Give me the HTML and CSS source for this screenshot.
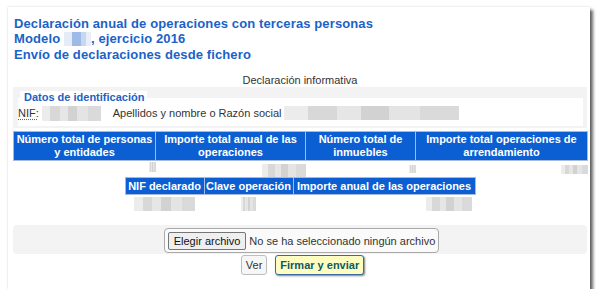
FILE: index.html
```html
<!DOCTYPE html>
<html lang="es">
<head>
<meta charset="utf-8">
<title>Declaración anual de operaciones con terceras personas</title>
<link rel="stylesheet" href="styles.css">
</head>
<body>
<div class="panel">
  <h1 class="title">Declaración anual de operaciones con terceras personas<br>Modelo <span class="blob blob-blue blob-model"></span>, ejercicio 2016<br>Envío de declaraciones desde fichero</h1>
  <p class="caption">Declaración informativa</p>
  <div class="ident">
    <div class="legend">Datos de identificación</div>
    <div class="ident-row">
      <abbr class="nif" title="Número de identificación fiscal">NIF:</abbr>
      <span class="blob blob-nif"></span>
      <span class="razon">Apellidos y nombre o Razón social</span>
      <span class="blob blob-razon"></span>
    </div>
  </div>

  <table class="grid grid-main">
    <colgroup><col class="c1"><col class="c2"><col class="c3"><col class="c4"></colgroup>
    <thead>
      <tr>
        <th>Número total de personas y entidades</th>
        <th>Importe total anual de las operaciones</th>
        <th>Número total de inmuebles</th>
        <th>Importe total operaciones de arrendamiento</th>
      </tr>
    </thead>
    <tbody>
      <tr>
        <td><span class="blob v1"></span></td>
        <td><span class="blob v2"></span></td>
        <td><span class="blob v3"></span></td>
        <td><span class="blob v4"></span></td>
      </tr>
    </tbody>
  </table>

  <table class="grid grid-detail">
    <colgroup><col class="d1"><col class="d2"><col class="d3"></colgroup>
    <thead>
      <tr>
        <th>NIF declarado</th>
        <th>Clave operación</th>
        <th>Importe anual de las operaciones</th>
      </tr>
    </thead>
    <tbody>
      <tr>
        <td class="center"><span class="blob w1"></span></td>
        <td class="center"><span class="blob w2"></span></td>
        <td class="right"><span class="blob w3"></span></td>
      </tr>
    </tbody>
  </table>

  <div class="file-box">
    <label class="file">
      <span class="file-btn">Elegir archivo</span>
      <span class="file-name">No se ha seleccionado ningún archivo</span>
    </label>
  </div>

  <div class="actions">
    <button class="btn btn-ver" type="button">Ver</button>
    <button class="btn btn-send" type="button">Firmar y enviar</button>
  </div>
</div>
</body>
</html>
```
FILE: styles.css
```css
* { box-sizing: border-box; }

body {
  margin: 0;
  background: #fff;
  font-family: "Liberation Sans", Arial, sans-serif;
  font-size: 11px;
  color: #333;
}

.panel {
  width: 582px;
  margin: 7px 0 0 8px;
  padding: 9px 3px 14px 5px;
  background: #fff;
  box-shadow: 0 0 2px rgba(0, 0, 0, 0.18), 3px 3px 3px rgba(0, 0, 0, 0.6);
}

.title {
  margin: 0;
  padding-left: 1px;
  font-size: 13px;
  line-height: 15.3px;
  font-weight: bold;
  letter-spacing: 0.12px;
  color: #1a62c8;
}

.caption {
  margin: 12px 0 0;
  line-height: 13px;
  text-align: center;
  color: #333;
}

/* blurred (anonymised) values */
.blob {
  display: inline-block;
  vertical-align: top;
  background: linear-gradient(90deg, #ececec 0 14%, #d8d8d8 14% 30%, #e6e6e6 30% 44%, #d2d2d2 44% 60%, #e4e4e4 60% 78%, #dadada 78%);
  filter: blur(0.6px);
}
.blob-blue {
  background: linear-gradient(90deg, #e4ecf8 0 30%, #9dbbe6 30% 62%, #c6d8f1 62% 80%, #e8eff9 80%);
}
.blob-model { width: 27px; height: 14px; margin-top: 1px; }

.ident {
  background: #f3f3f3;
  padding: 4px 4px 2px 5px;
  line-height: 13px;
}
.legend {
  width: max-content;
  margin-left: 2px;
  padding: 0 3px 0 4px;
  background: #fff;
  font-weight: bold;
  color: #1d5fc4;
}
.ident-row {
  display: flex;
  align-items: center;
  margin-top: -6px;
  padding: 8px 0 5px;
  line-height: 14px;
  background: #fff;
}
.nif {
  text-decoration: underline dotted #666;
  text-underline-offset: 2px;
}
.blob-nif { width: 59px; height: 15px; margin-left: 3px; }
.razon { margin-left: 12px; }
.blob-razon { width: 175px; height: 14px; margin-left: 2px; }

.grid {
  border-collapse: collapse;
  table-layout: fixed;
}
.grid th {
  background: #0b5fd3;
  color: #fff;
  font-weight: bold;
  border: 1px solid #a6badb;
  line-height: 13px;
  padding: 1px 2px;
  text-align: center;
}
.grid td {
  padding: 0;
  text-align: right;
  vertical-align: top;
}

.grid-main { width: 574px; margin-top: 3px; }
.grid-main .c1 { width: 142px; }
.grid-main .c2 { width: 150px; }
.grid-main .c3 { width: 110px; }
.grid-main .c4 { width: 172px; }
.grid-main td { height: 16px; }

.v1 { width: 7px; height: 10px; margin-top: 1px; }
.v2 { width: 44px; height: 13px; margin-top: 3px; }
.v3 { width: 7px; height: 8px; margin-top: 4px; }
.v4 { width: 27px; height: 9px; margin-top: 4px; }

.grid-detail { width: 350px; margin: 0 auto; }
.grid-detail .d1 { width: 79px; }
.grid-detail .d2 { width: 89px; }
.grid-detail .d3 { width: 182px; }
.grid-detail th {
  padding: 2px 0 1px;
  white-space: nowrap;
}
.grid-detail td { height: 18px; }
.grid-detail td.center { text-align: center; }
.grid-detail td.right { padding-right: 3px; }

.w1 { width: 61px; height: 14px; margin-top: 2px; }
.w2 { width: 15px; height: 14px; margin-top: 2px; }
.w3 { width: 46px; height: 14px; margin-top: 2px; }

.file-box {
  display: flex;
  justify-content: center;
  margin-top: 13px;
  padding: 3px 0 1px 3px;
  background: #f3f3f3;
  border-radius: 4px;
}
.file {
  display: inline-flex;
  align-items: center;
  height: 25px;
  padding: 0 3px;
  border: 1px solid #a9a9a9;
  border-radius: 4px;
  background: #fafafa;
}
.file-btn {
  display: inline-block;
  height: 18px;
  padding: 0 5px;
  line-height: 16px;
  border: 1px solid #767676;
  border-radius: 2px;
  background: #efefef;
  color: #111;
}
.file-name { margin-left: 3px; color: #333; }

.actions {
  display: flex;
  justify-content: center;
  gap: 8px;
  margin-top: 1px;
  padding-left: 5px;
}
.btn {
  height: 20px;
  padding: 0 4px;
  font-family: "Liberation Sans", Arial, sans-serif;
  font-size: 11px;
  border-radius: 3px;
  cursor: pointer;
}
.btn-ver {
  border: 1px solid #bdbdbd;
  background: #f6f6f6;
  color: #333;
}
.btn-send {
  border: 1px solid #3b6aa0;
  background: #fdfdc2;
  color: #0d5a66;
  font-weight: bold;
  box-shadow: 1px 1px 2px rgba(0, 0, 0, 0.5);
}
```
